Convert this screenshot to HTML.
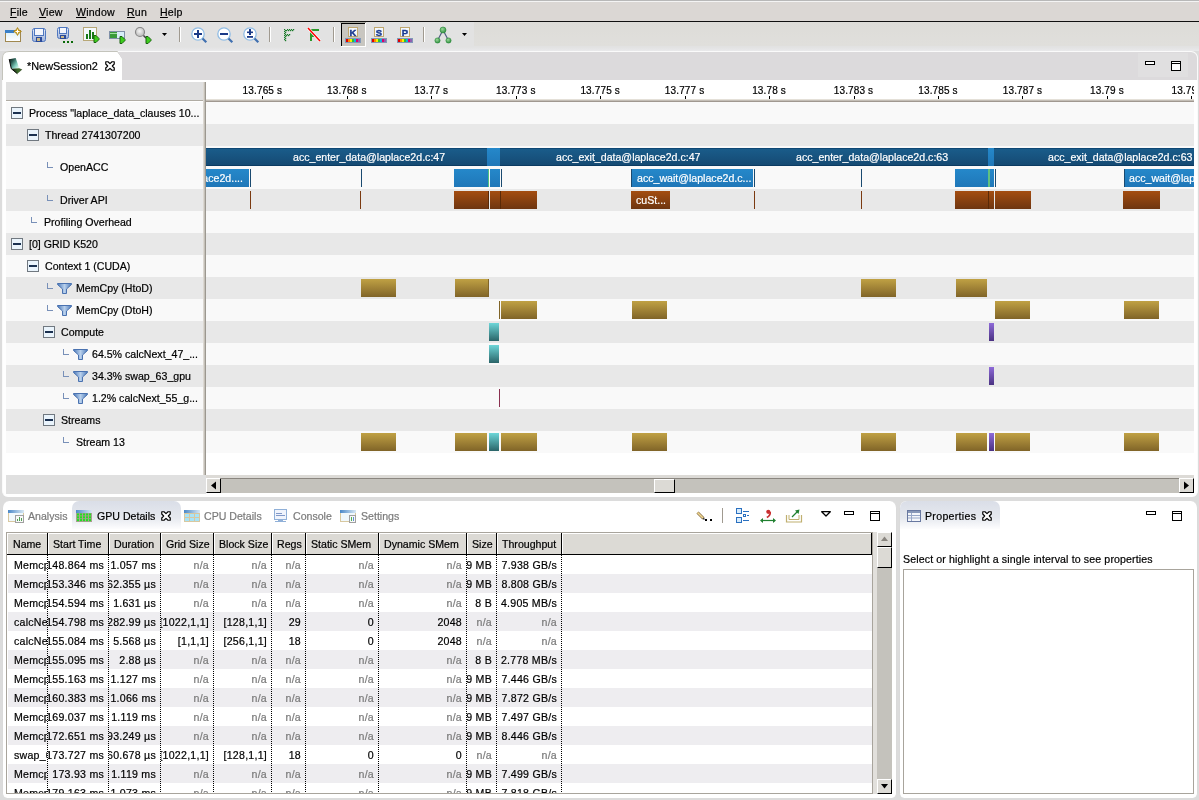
<!DOCTYPE html>
<html><head><meta charset="utf-8">
<style>
*{margin:0;padding:0;box-sizing:border-box}
html,body{width:1199px;height:800px;overflow:hidden;background:#dcdcdc;font-family:"Liberation Sans",sans-serif;font-size:10.6px;color:#000;-webkit-text-stroke-width:0.2px}
#root{position:absolute;left:0;top:0;width:1199px;height:800px;will-change:transform;overflow:hidden}
.a{position:absolute}
.t{position:absolute;white-space:nowrap;line-height:12px}
.mi{font-size:10.6px;top:6px;letter-spacing:0.2px}
.mi u{text-decoration:underline;text-underline-offset:0.5px}
.w{background:#f9f9f9}
.g{background:#e8e8e8}
.minus{position:absolute;width:12px;height:12px;border:1px solid #707880;background:#eaf4fc}
.minus:after{content:"";position:absolute;left:1px;top:4px;width:8px;height:2px;background:#1a3050}
.corner{position:absolute;width:6px;height:6px;border-left:1px solid #7890b8;border-bottom:1px solid #7890b8}
.db{position:absolute;background:linear-gradient(#1a5c8a,#154a73);border-top:1px solid #0e4774;border-bottom:1px solid #0b3b62}
.lb{position:absolute;background:linear-gradient(#2588ca,#1f77b8)}
.or{position:absolute;background:linear-gradient(#a44d10,#6e3510)}
.gd{position:absolute;background:linear-gradient(#c0a144,#806428)}
.tl{position:absolute;background:linear-gradient(#6dd6d8,#2a6468)}
.pu{position:absolute;background:linear-gradient(#8e6ad8,#4a3282)}
.bt{position:absolute;color:#fff;white-space:nowrap;line-height:12px;font-size:10.6px}
.ru{position:absolute;top:83px;white-space:nowrap;line-height:12px;font-size:10px;letter-spacing:0.15px;text-align:center;width:80px}
.tick{position:absolute;top:96px;width:1px;height:3px;background:#000}
.sbtn{position:absolute;background:#dcdad5;border-top:1px solid #fff;border-left:1px solid #fff;border-right:1px solid #000;border-bottom:1px solid #000}
.hd{position:absolute;top:533px;height:21px;background:#dcdad5;border-right:1px solid #000;box-shadow:inset 1px 1px 0 #fff}
.hdt{position:absolute;top:5px;white-space:nowrap;line-height:12px;font-size:10.6px}
.cell{position:absolute;height:19px;overflow:hidden;white-space:nowrap;line-height:19px;font-size:10.6px}
.r{text-align:right}
.na{color:#7a7a7a}
.dot{position:absolute;top:555px;height:238px;width:1px;background:repeating-linear-gradient(#000 0 1px,transparent 1px 2px)}
</style></head><body><div id="root">

<div class="a" style="left:0;top:0;width:1199px;height:1px;background:#b8b8b8"></div>
<div class="a" style="left:0;top:1px;width:1199px;height:1px;background:#f4f4f4"></div>
<div class="a" style="left:0;top:2px;width:1199px;height:19px;background:#dbd7d4"></div>
<div class="a" style="left:0;top:21px;width:1199px;height:1px;background:#101010"></div>
<div class="a" style="left:0;top:22px;width:1199px;height:29px;background:#e2e2e2"></div>
<div class="a" style="left:474px;top:22px;width:725px;height:24px;background:linear-gradient(#dddcd8,#e0dfdc)"></div>
<div class="a" style="left:0;top:47px;width:1199px;height:4px;background:linear-gradient(#e2e2e2,#e9e9eb)"></div>
<div class="t mi" style="left:10px"><u>F</u>ile</div>
<div class="t mi" style="left:39px"><u>V</u>iew</div>
<div class="t mi" style="left:76px"><u>W</u>indow</div>
<div class="t mi" style="left:127px"><u>R</u>un</div>
<div class="t mi" style="left:160px"><u>H</u>elp</div>
<div class="a" style="left:2px;top:51px;width:1196px;height:446px;background:#fff;border:1px solid #fafafa;border-bottom:none;border-radius:7px 7px 6px 6px"></div>
<svg class="a" style="left:2px;top:51px" width="125" height="30"><path d="M0.5 29 V7 Q0.5 0.5 7 0.5 H115.5 L121 8" fill="none" stroke="#c4c4bc" stroke-width="1"/></svg>
<div class="a" style="left:118px;top:52px;width:1079px;height:28px;background:#dcdadc;border-radius:0 6px 0 0;clip-path:polygon(0 0,100% 0,100% 100%,4px 100%,4px 7px)"></div>
<div class="t" style="left:27px;top:60px;font-size:10.9px">*NewSession2</div>
<div class="a" style="left:6px;top:82px;width:197px;height:19px;background:#e0e0e0"></div>
<div class="a" style="left:6px;top:100px;width:197px;height:1px;background:#b0aca4"></div>
<div class="a" style="left:206px;top:99px;width:988px;height:1px;background:#e4e0d8"></div>
<div class="a" style="left:206px;top:100px;width:988px;height:1px;background:#c4beb6"></div>
<div class="a" style="left:206px;top:101px;width:988px;height:1px;background:#a09890"></div>
<div class="a" style="left:206px;top:80px;width:988px;height:19px;overflow:hidden">
<div class="ru" style="left:16.4px;top:5px">13.765 s</div>
<div class="tick" style="left:56px;top:16px"></div>
<div class="ru" style="left:100.8px;top:5px">13.768 s</div>
<div class="tick" style="left:141px;top:16px"></div>
<div class="ru" style="left:185.3px;top:5px">13.77 s</div>
<div class="tick" style="left:225px;top:16px"></div>
<div class="ru" style="left:269.8px;top:5px">13.773 s</div>
<div class="tick" style="left:310px;top:16px"></div>
<div class="ru" style="left:354.2px;top:5px">13.775 s</div>
<div class="tick" style="left:394px;top:16px"></div>
<div class="ru" style="left:438.6px;top:5px">13.777 s</div>
<div class="tick" style="left:479px;top:16px"></div>
<div class="ru" style="left:523.1px;top:5px">13.78 s</div>
<div class="tick" style="left:563px;top:16px"></div>
<div class="ru" style="left:607.5px;top:5px">13.783 s</div>
<div class="tick" style="left:648px;top:16px"></div>
<div class="ru" style="left:692.0px;top:5px">13.785 s</div>
<div class="tick" style="left:732px;top:16px"></div>
<div class="ru" style="left:776.5px;top:5px">13.787 s</div>
<div class="tick" style="left:816px;top:16px"></div>
<div class="ru" style="left:860.9px;top:5px">13.79 s</div>
<div class="tick" style="left:901px;top:16px"></div>
<div class="ru" style="left:945.3px;top:5px">13.792 s</div>
<div class="tick" style="left:985px;top:16px"></div>
</div>
<div class="a" style="left:203px;top:82px;width:2px;height:393px;background:#dcd8d2"></div>
<div class="a" style="left:204px;top:82px;width:1px;height:393px;background:#c4c0b8"></div>
<div class="a" style="left:205px;top:82px;width:1px;height:393px;background:#9c9890"></div>
<div class="a w" style="left:6px;top:102px;width:197px;height:22px"></div>
<div class="a w" style="left:206px;top:102px;width:988px;height:22px"></div>
<div class="a g" style="left:6px;top:124px;width:197px;height:22px"></div>
<div class="a g" style="left:206px;top:124px;width:988px;height:22px"></div>
<div class="a w" style="left:6px;top:146px;width:197px;height:43px"></div>
<div class="a w" style="left:206px;top:146px;width:988px;height:43px"></div>
<div class="a g" style="left:6px;top:189px;width:197px;height:22px"></div>
<div class="a g" style="left:206px;top:189px;width:988px;height:22px"></div>
<div class="a w" style="left:6px;top:211px;width:197px;height:22px"></div>
<div class="a w" style="left:206px;top:211px;width:988px;height:22px"></div>
<div class="a g" style="left:6px;top:233px;width:197px;height:22px"></div>
<div class="a g" style="left:206px;top:233px;width:988px;height:22px"></div>
<div class="a w" style="left:6px;top:255px;width:197px;height:22px"></div>
<div class="a w" style="left:206px;top:255px;width:988px;height:22px"></div>
<div class="a g" style="left:6px;top:277px;width:197px;height:22px"></div>
<div class="a g" style="left:206px;top:277px;width:988px;height:22px"></div>
<div class="a w" style="left:6px;top:299px;width:197px;height:22px"></div>
<div class="a w" style="left:206px;top:299px;width:988px;height:22px"></div>
<div class="a g" style="left:6px;top:321px;width:197px;height:22px"></div>
<div class="a g" style="left:206px;top:321px;width:988px;height:22px"></div>
<div class="a w" style="left:6px;top:343px;width:197px;height:22px"></div>
<div class="a w" style="left:206px;top:343px;width:988px;height:22px"></div>
<div class="a g" style="left:6px;top:365px;width:197px;height:22px"></div>
<div class="a g" style="left:206px;top:365px;width:988px;height:22px"></div>
<div class="a w" style="left:6px;top:387px;width:197px;height:22px"></div>
<div class="a w" style="left:206px;top:387px;width:988px;height:22px"></div>
<div class="a g" style="left:6px;top:409px;width:197px;height:22px"></div>
<div class="a g" style="left:206px;top:409px;width:988px;height:22px"></div>
<div class="a w" style="left:6px;top:431px;width:197px;height:22px"></div>
<div class="a w" style="left:206px;top:431px;width:988px;height:22px"></div>
<div class="minus" style="left:11px;top:107px"></div>
<div class="t" style="left:29px;top:107px">Process "laplace_data_clauses 10...</div>
<div class="minus" style="left:27px;top:129px"></div>
<div class="t" style="left:45px;top:129px">Thread 2741307200</div>
<div class="corner" style="left:47px;top:162px"></div>
<div class="t" style="left:60px;top:161px">OpenACC</div>
<div class="corner" style="left:47px;top:195px"></div>
<div class="t" style="left:60px;top:194px">Driver API</div>
<div class="corner" style="left:31px;top:217px"></div>
<div class="t" style="left:44px;top:216px">Profiling Overhead</div>
<div class="minus" style="left:11px;top:238px"></div>
<div class="t" style="left:29px;top:238px">[0] GRID K520</div>
<div class="minus" style="left:27px;top:260px"></div>
<div class="t" style="left:45px;top:260px">Context 1 (CUDA)</div>
<div class="corner" style="left:47px;top:283px"></div>
<svg class="a" style="left:57px;top:283px" width="15" height="11" viewBox="0 0 15 11"><defs><linearGradient id="fg" x1="0" x2="1"><stop offset="0" stop-color="#4a78b8"/><stop offset="0.5" stop-color="#b8d0ec"/><stop offset="1" stop-color="#4a78b8"/></linearGradient></defs><path d="M0.5 0.5 H14.5 V1.5 L9.5 6 V10.5 H5.5 V6 L0.5 1.5 Z" fill="url(#fg)" stroke="#4a72b0" stroke-width="1"/></svg>
<div class="t" style="left:76px;top:282px">MemCpy (HtoD)</div>
<div class="corner" style="left:47px;top:305px"></div>
<svg class="a" style="left:57px;top:305px" width="15" height="11" viewBox="0 0 15 11"><defs><linearGradient id="fg" x1="0" x2="1"><stop offset="0" stop-color="#4a78b8"/><stop offset="0.5" stop-color="#b8d0ec"/><stop offset="1" stop-color="#4a78b8"/></linearGradient></defs><path d="M0.5 0.5 H14.5 V1.5 L9.5 6 V10.5 H5.5 V6 L0.5 1.5 Z" fill="url(#fg)" stroke="#4a72b0" stroke-width="1"/></svg>
<div class="t" style="left:76px;top:304px">MemCpy (DtoH)</div>
<div class="minus" style="left:43px;top:326px"></div>
<div class="t" style="left:61px;top:326px">Compute</div>
<div class="corner" style="left:63px;top:349px"></div>
<svg class="a" style="left:73px;top:349px" width="15" height="11" viewBox="0 0 15 11"><defs><linearGradient id="fg" x1="0" x2="1"><stop offset="0" stop-color="#4a78b8"/><stop offset="0.5" stop-color="#b8d0ec"/><stop offset="1" stop-color="#4a78b8"/></linearGradient></defs><path d="M0.5 0.5 H14.5 V1.5 L9.5 6 V10.5 H5.5 V6 L0.5 1.5 Z" fill="url(#fg)" stroke="#4a72b0" stroke-width="1"/></svg>
<div class="t" style="left:92px;top:348px">64.5% calcNext_47_...</div>
<div class="corner" style="left:63px;top:371px"></div>
<svg class="a" style="left:73px;top:371px" width="15" height="11" viewBox="0 0 15 11"><defs><linearGradient id="fg" x1="0" x2="1"><stop offset="0" stop-color="#4a78b8"/><stop offset="0.5" stop-color="#b8d0ec"/><stop offset="1" stop-color="#4a78b8"/></linearGradient></defs><path d="M0.5 0.5 H14.5 V1.5 L9.5 6 V10.5 H5.5 V6 L0.5 1.5 Z" fill="url(#fg)" stroke="#4a72b0" stroke-width="1"/></svg>
<div class="t" style="left:92px;top:370px">34.3% swap_63_gpu</div>
<div class="corner" style="left:63px;top:393px"></div>
<svg class="a" style="left:73px;top:393px" width="15" height="11" viewBox="0 0 15 11"><defs><linearGradient id="fg" x1="0" x2="1"><stop offset="0" stop-color="#4a78b8"/><stop offset="0.5" stop-color="#b8d0ec"/><stop offset="1" stop-color="#4a78b8"/></linearGradient></defs><path d="M0.5 0.5 H14.5 V1.5 L9.5 6 V10.5 H5.5 V6 L0.5 1.5 Z" fill="url(#fg)" stroke="#4a72b0" stroke-width="1"/></svg>
<div class="t" style="left:92px;top:392px">1.2% calcNext_55_g...</div>
<div class="minus" style="left:43px;top:414px"></div>
<div class="t" style="left:61px;top:414px">Streams</div>
<div class="corner" style="left:63px;top:437px"></div>
<div class="t" style="left:76px;top:436px">Stream 13</div>
<div class="db" style="left:206px;top:148px;width:281px;height:18px"></div>
<div class="lb" style="left:487px;top:148px;width:13px;height:18px"></div>
<div class="db" style="left:500px;top:148px;width:488px;height:18px"></div>
<div class="lb" style="left:988px;top:148px;width:6px;height:18px"></div>
<div class="db" style="left:994px;top:148px;width:200px;height:18px"></div>
<div class="bt" style="left:293px;top:151px">acc_enter_data@laplace2d.c:47</div>
<div class="bt" style="left:556px;top:151px">acc_exit_data@laplace2d.c:47</div>
<div class="bt" style="left:796px;top:151px">acc_enter_data@laplace2d.c:63</div>
<div class="bt" style="left:1048px;top:151px">acc_exit_data@laplace2d.c:63</div>
<div class="lb" style="left:206px;top:169px;width:43px;height:18px;overflow:hidden"><div class="bt" style="right:6px;top:3px">ace2d....</div></div>
<div class="a" style="left:250px;top:169px;width:1px;height:18px;background:#1a4a70"></div>
<div class="a" style="left:361px;top:169px;width:1px;height:18px;background:#1a4a70"></div>
<div class="lb" style="left:454px;top:169px;width:34px;height:18px"></div>
<div class="a" style="left:488px;top:169px;width:1px;height:18px;background:#50c080"></div>
<div class="lb" style="left:490px;top:169px;width:10px;height:18px"></div>
<div class="a" style="left:501px;top:169px;width:1px;height:18px;background:#1a4a70"></div>
<div class="lb" style="left:631px;top:169px;width:122px;height:18px;overflow:hidden;border-left:1px solid #1a4a70"><div class="bt" style="left:5px;top:3px">acc_wait@laplace2d.c...</div></div>
<div class="a" style="left:754px;top:169px;width:1px;height:18px;background:#1a4a70"></div>
<div class="a" style="left:861px;top:169px;width:1px;height:18px;background:#1a4a70"></div>
<div class="lb" style="left:955px;top:169px;width:39px;height:18px"></div>
<div class="a" style="left:988px;top:169px;width:2px;height:18px;background:#60c080"></div>
<div class="a" style="left:995px;top:169px;width:1px;height:18px;background:#1a4a70"></div>
<div class="lb" style="left:1124px;top:169px;width:70px;height:18px;overflow:hidden;border-left:1px solid #1a4a70"><div class="bt" style="left:4px;top:3px">acc_wait@laplace2d.c:63</div></div>
<div class="a" style="left:250px;top:191px;width:1px;height:18px;background:#7a3a10"></div>
<div class="a" style="left:360px;top:191px;width:1px;height:18px;background:#7a3a10"></div>
<div class="or" style="left:454px;top:191px;width:35px;height:18px"></div>
<div class="a" style="left:488px;top:191px;width:1px;height:18px;background:#5a2a08"></div>
<div class="or" style="left:490px;top:191px;width:47px;height:18px"></div>
<div class="a" style="left:500px;top:191px;width:1px;height:18px;background:#5a2a08"></div>
<div class="or" style="left:631px;top:191px;width:39px;height:18px;overflow:hidden"><div class="bt" style="left:5px;top:3px">cuSt...</div></div>
<div class="a" style="left:754px;top:191px;width:1px;height:18px;background:#7a3a10"></div>
<div class="a" style="left:861px;top:191px;width:1px;height:18px;background:#7a3a10"></div>
<div class="or" style="left:955px;top:191px;width:39px;height:18px"></div>
<div class="a" style="left:988px;top:191px;width:1px;height:18px;background:#5a2a08"></div>
<div class="or" style="left:995px;top:191px;width:36px;height:18px"></div>
<div class="or" style="left:1123px;top:191px;width:37px;height:18px"></div>
<div class="gd" style="left:361px;top:279px;width:35px;height:18px"></div>
<div class="gd" style="left:455px;top:279px;width:33px;height:18px"></div>
<div class="gd" style="left:861px;top:279px;width:35px;height:18px"></div>
<div class="gd" style="left:956px;top:279px;width:31px;height:18px"></div>
<div class="a" style="left:488px;top:279px;width:1px;height:18px;background:#806428"></div>
<div class="a" style="left:499px;top:301px;width:1px;height:18px;background:#806428"></div>
<div class="gd" style="left:501px;top:301px;width:36px;height:18px"></div>
<div class="gd" style="left:632px;top:301px;width:35px;height:18px"></div>
<div class="gd" style="left:995px;top:301px;width:35px;height:18px"></div>
<div class="gd" style="left:1124px;top:301px;width:35px;height:18px"></div>
<div class="tl" style="left:489px;top:323px;width:10px;height:18px"></div>
<div class="pu" style="left:989px;top:323px;width:5px;height:18px"></div>
<div class="tl" style="left:489px;top:345px;width:10px;height:18px"></div>
<div class="pu" style="left:989px;top:367px;width:5px;height:18px"></div>
<div class="a" style="left:499px;top:389px;width:1px;height:18px;background:#8a3050"></div>
<div class="gd" style="left:361px;top:433px;width:35px;height:18px"></div>
<div class="gd" style="left:455px;top:433px;width:32px;height:18px"></div>
<div class="gd" style="left:501px;top:433px;width:36px;height:18px"></div>
<div class="gd" style="left:632px;top:433px;width:35px;height:18px"></div>
<div class="gd" style="left:861px;top:433px;width:35px;height:18px"></div>
<div class="gd" style="left:956px;top:433px;width:31px;height:18px"></div>
<div class="gd" style="left:995px;top:433px;width:35px;height:18px"></div>
<div class="gd" style="left:1124px;top:433px;width:35px;height:18px"></div>
<div class="tl" style="left:489px;top:433px;width:10px;height:18px"></div>
<div class="pu" style="left:989px;top:433px;width:5px;height:18px"></div>
<div class="a" style="left:6px;top:475px;width:200px;height:19px;background:#e0e0e0"></div>
<div class="a" style="left:206px;top:475px;width:988px;height:3px;background:#dcdad6"></div>
<div class="a" style="left:206px;top:478px;width:988px;height:1px;background:#8a8680"></div>
<div class="a" style="left:206px;top:479px;width:988px;height:14px;background:#c4c2bc"></div>
<div class="sbtn" style="left:206px;top:478px;width:15px;height:15px"></div>
<svg class="a" style="left:210px;top:481px" width="8" height="9"><path d="M1 4.5 L6 0.5 V8.5 Z" fill="#000"/></svg>
<div class="sbtn" style="left:654px;top:479px;width:21px;height:14px"></div>
<div class="sbtn" style="left:1179px;top:478px;width:15px;height:15px"></div>
<svg class="a" style="left:1183px;top:481px" width="8" height="9"><path d="M6 4.5 L1 0.5 V8.5 Z" fill="#000"/></svg>
<div class="a" style="left:1138px;top:53px;width:50px;height:24px;background:#e0dfe0"></div>
<div class="a" style="left:1145px;top:61px;width:10px;height:4px;border:1px solid #000;background:#fff"></div>
<div class="a" style="left:1171px;top:61px;width:10px;height:10px;border:1px solid #000;background:#fff;box-shadow:inset 0 1px 0 #fff,inset 0 2px 0 #000"></div>
<div class="a" style="left:2px;top:501px;width:895px;height:297px;background:#fff;border:1px solid #dadada;border-top:none;border-bottom:none;border-radius:7px 7px 5px 5px"></div>
<div class="a" style="left:72px;top:501px;width:109px;height:28px;background:linear-gradient(#dadee7,#e6e9ef 60%,#fdfdfe);border-radius:7px 7px 0 0"></div>
<div class="t" style="left:28px;top:510px;color:#7a7a7a">Analysis</div>
<div class="t" style="left:97px;top:510px;color:#000">GPU Details</div>
<div class="t" style="left:204px;top:510px;color:#7a7a7a">CPU Details</div>
<div class="t" style="left:293px;top:510px;color:#7a7a7a">Console</div>
<div class="t" style="left:361px;top:510px;color:#7a7a7a">Settings</div>
<div class="a" style="left:6px;top:532px;width:867px;height:262px;border:1px solid #a8a49c;background:#fff"></div>
<div class="hd" style="left:7px;width:41px"><div class="hdt" style="left:6px">Name</div></div>
<div class="hd" style="left:48px;width:61px"><div class="hdt" style="left:5px">Start Time</div></div>
<div class="hd" style="left:109px;width:52px"><div class="hdt" style="left:5px">Duration</div></div>
<div class="hd" style="left:161px;width:53px"><div class="hdt" style="left:5px">Grid Size</div></div>
<div class="hd" style="left:214px;width:58px"><div class="hdt" style="left:5px">Block Size</div></div>
<div class="hd" style="left:272px;width:34px"><div class="hdt" style="left:5px">Regs</div></div>
<div class="hd" style="left:306px;width:73px"><div class="hdt" style="left:5px">Static SMem</div></div>
<div class="hd" style="left:379px;width:88px"><div class="hdt" style="left:5px">Dynamic SMem</div></div>
<div class="hd" style="left:467px;width:30px"><div class="hdt" style="left:5px">Size</div></div>
<div class="hd" style="left:497px;width:65px"><div class="hdt" style="left:5px">Throughput</div></div>
<div class="hd" style="left:562px;width:310px"></div>
<div class="a" style="left:7px;top:554px;width:865px;height:1px;background:#000"></div>
<div class="a" style="left:7px;top:555px;width:865px;height:238px;overflow:hidden">
<div class="a" style="left:1px;top:0px;width:864px;height:19px;background:#fff"></div>
<div class="cell" style="left:0px;top:0px;width:40px"><span style="position:absolute;top:1px;left:7px;letter-spacing:0.25px">Memcpy HtoD</span></div>
<div class="cell " style="left:41px;top:0px;width:60px"><span style="position:absolute;top:1px;right:4px;letter-spacing:0.25px">148.864 ms</span></div>
<div class="cell " style="left:102px;top:0px;width:51px"><span style="position:absolute;top:1px;right:4px;letter-spacing:0.25px">1.057 ms</span></div>
<div class="cell na" style="left:154px;top:0px;width:52px"><span style="position:absolute;top:1px;right:4px;letter-spacing:0.25px">n/a</span></div>
<div class="cell na" style="left:207px;top:0px;width:57px"><span style="position:absolute;top:1px;right:4px;letter-spacing:0.25px">n/a</span></div>
<div class="cell na" style="left:265px;top:0px;width:33px"><span style="position:absolute;top:1px;right:4px;letter-spacing:0.25px">n/a</span></div>
<div class="cell na" style="left:299px;top:0px;width:72px"><span style="position:absolute;top:1px;right:4px;letter-spacing:0.25px">n/a</span></div>
<div class="cell na" style="left:372px;top:0px;width:87px"><span style="position:absolute;top:1px;right:4px;letter-spacing:0.25px">n/a</span></div>
<div class="cell " style="left:460px;top:0px;width:29px"><span style="position:absolute;top:1px;right:4px;letter-spacing:0.25px">7.9 MB</span></div>
<div class="cell " style="left:490px;top:0px;width:64px"><span style="position:absolute;top:1px;right:4px;letter-spacing:0.25px">7.938 GB/s</span></div>
<div class="a" style="left:1px;top:19px;width:864px;height:19px;background:#eeedf0"></div>
<div class="cell" style="left:0px;top:19px;width:40px"><span style="position:absolute;top:1px;left:7px;letter-spacing:0.25px">Memcpy HtoD</span></div>
<div class="cell " style="left:41px;top:19px;width:60px"><span style="position:absolute;top:1px;right:4px;letter-spacing:0.25px">153.346 ms</span></div>
<div class="cell " style="left:102px;top:19px;width:51px"><span style="position:absolute;top:1px;right:4px;letter-spacing:0.25px">62.355 µs</span></div>
<div class="cell na" style="left:154px;top:19px;width:52px"><span style="position:absolute;top:1px;right:4px;letter-spacing:0.25px">n/a</span></div>
<div class="cell na" style="left:207px;top:19px;width:57px"><span style="position:absolute;top:1px;right:4px;letter-spacing:0.25px">n/a</span></div>
<div class="cell na" style="left:265px;top:19px;width:33px"><span style="position:absolute;top:1px;right:4px;letter-spacing:0.25px">n/a</span></div>
<div class="cell na" style="left:299px;top:19px;width:72px"><span style="position:absolute;top:1px;right:4px;letter-spacing:0.25px">n/a</span></div>
<div class="cell na" style="left:372px;top:19px;width:87px"><span style="position:absolute;top:1px;right:4px;letter-spacing:0.25px">n/a</span></div>
<div class="cell " style="left:460px;top:19px;width:29px"><span style="position:absolute;top:1px;right:4px;letter-spacing:0.25px">7.9 MB</span></div>
<div class="cell " style="left:490px;top:19px;width:64px"><span style="position:absolute;top:1px;right:4px;letter-spacing:0.25px">8.808 GB/s</span></div>
<div class="a" style="left:1px;top:38px;width:864px;height:19px;background:#fff"></div>
<div class="cell" style="left:0px;top:38px;width:40px"><span style="position:absolute;top:1px;left:7px;letter-spacing:0.25px">Memcpy HtoD</span></div>
<div class="cell " style="left:41px;top:38px;width:60px"><span style="position:absolute;top:1px;right:4px;letter-spacing:0.25px">154.594 ms</span></div>
<div class="cell " style="left:102px;top:38px;width:51px"><span style="position:absolute;top:1px;right:4px;letter-spacing:0.25px">1.631 µs</span></div>
<div class="cell na" style="left:154px;top:38px;width:52px"><span style="position:absolute;top:1px;right:4px;letter-spacing:0.25px">n/a</span></div>
<div class="cell na" style="left:207px;top:38px;width:57px"><span style="position:absolute;top:1px;right:4px;letter-spacing:0.25px">n/a</span></div>
<div class="cell na" style="left:265px;top:38px;width:33px"><span style="position:absolute;top:1px;right:4px;letter-spacing:0.25px">n/a</span></div>
<div class="cell na" style="left:299px;top:38px;width:72px"><span style="position:absolute;top:1px;right:4px;letter-spacing:0.25px">n/a</span></div>
<div class="cell na" style="left:372px;top:38px;width:87px"><span style="position:absolute;top:1px;right:4px;letter-spacing:0.25px">n/a</span></div>
<div class="cell " style="left:460px;top:38px;width:29px"><span style="position:absolute;top:1px;right:4px;letter-spacing:0.25px">8 B</span></div>
<div class="cell " style="left:490px;top:38px;width:64px"><span style="position:absolute;top:1px;right:4px;letter-spacing:0.25px">4.905 MB/s</span></div>
<div class="a" style="left:1px;top:57px;width:864px;height:19px;background:#eeedf0"></div>
<div class="cell" style="left:0px;top:57px;width:40px"><span style="position:absolute;top:1px;left:7px;letter-spacing:0.25px">calcNext_47_gpu</span></div>
<div class="cell " style="left:41px;top:57px;width:60px"><span style="position:absolute;top:1px;right:4px;letter-spacing:0.25px">154.798 ms</span></div>
<div class="cell " style="left:102px;top:57px;width:51px"><span style="position:absolute;top:1px;right:4px;letter-spacing:0.25px">282.99 µs</span></div>
<div class="cell " style="left:154px;top:57px;width:52px"><span style="position:absolute;top:1px;right:4px;letter-spacing:0.25px">[1022,1,1]</span></div>
<div class="cell " style="left:207px;top:57px;width:57px"><span style="position:absolute;top:1px;right:4px;letter-spacing:0.25px">[128,1,1]</span></div>
<div class="cell " style="left:265px;top:57px;width:33px"><span style="position:absolute;top:1px;right:4px;letter-spacing:0.25px">29</span></div>
<div class="cell " style="left:299px;top:57px;width:72px"><span style="position:absolute;top:1px;right:4px;letter-spacing:0.25px">0</span></div>
<div class="cell " style="left:372px;top:57px;width:87px"><span style="position:absolute;top:1px;right:4px;letter-spacing:0.25px">2048</span></div>
<div class="cell na" style="left:460px;top:57px;width:29px"><span style="position:absolute;top:1px;right:4px;letter-spacing:0.25px">n/a</span></div>
<div class="cell na" style="left:490px;top:57px;width:64px"><span style="position:absolute;top:1px;right:4px;letter-spacing:0.25px">n/a</span></div>
<div class="a" style="left:1px;top:76px;width:864px;height:19px;background:#fff"></div>
<div class="cell" style="left:0px;top:76px;width:40px"><span style="position:absolute;top:1px;left:7px;letter-spacing:0.25px">calcNext_55_gpu</span></div>
<div class="cell " style="left:41px;top:76px;width:60px"><span style="position:absolute;top:1px;right:4px;letter-spacing:0.25px">155.084 ms</span></div>
<div class="cell " style="left:102px;top:76px;width:51px"><span style="position:absolute;top:1px;right:4px;letter-spacing:0.25px">5.568 µs</span></div>
<div class="cell " style="left:154px;top:76px;width:52px"><span style="position:absolute;top:1px;right:4px;letter-spacing:0.25px">[1,1,1]</span></div>
<div class="cell " style="left:207px;top:76px;width:57px"><span style="position:absolute;top:1px;right:4px;letter-spacing:0.25px">[256,1,1]</span></div>
<div class="cell " style="left:265px;top:76px;width:33px"><span style="position:absolute;top:1px;right:4px;letter-spacing:0.25px">18</span></div>
<div class="cell " style="left:299px;top:76px;width:72px"><span style="position:absolute;top:1px;right:4px;letter-spacing:0.25px">0</span></div>
<div class="cell " style="left:372px;top:76px;width:87px"><span style="position:absolute;top:1px;right:4px;letter-spacing:0.25px">2048</span></div>
<div class="cell na" style="left:460px;top:76px;width:29px"><span style="position:absolute;top:1px;right:4px;letter-spacing:0.25px">n/a</span></div>
<div class="cell na" style="left:490px;top:76px;width:64px"><span style="position:absolute;top:1px;right:4px;letter-spacing:0.25px">n/a</span></div>
<div class="a" style="left:1px;top:95px;width:864px;height:19px;background:#eeedf0"></div>
<div class="cell" style="left:0px;top:95px;width:40px"><span style="position:absolute;top:1px;left:7px;letter-spacing:0.25px">Memcpy DtoH</span></div>
<div class="cell " style="left:41px;top:95px;width:60px"><span style="position:absolute;top:1px;right:4px;letter-spacing:0.25px">155.095 ms</span></div>
<div class="cell " style="left:102px;top:95px;width:51px"><span style="position:absolute;top:1px;right:4px;letter-spacing:0.25px">2.88 µs</span></div>
<div class="cell na" style="left:154px;top:95px;width:52px"><span style="position:absolute;top:1px;right:4px;letter-spacing:0.25px">n/a</span></div>
<div class="cell na" style="left:207px;top:95px;width:57px"><span style="position:absolute;top:1px;right:4px;letter-spacing:0.25px">n/a</span></div>
<div class="cell na" style="left:265px;top:95px;width:33px"><span style="position:absolute;top:1px;right:4px;letter-spacing:0.25px">n/a</span></div>
<div class="cell na" style="left:299px;top:95px;width:72px"><span style="position:absolute;top:1px;right:4px;letter-spacing:0.25px">n/a</span></div>
<div class="cell na" style="left:372px;top:95px;width:87px"><span style="position:absolute;top:1px;right:4px;letter-spacing:0.25px">n/a</span></div>
<div class="cell " style="left:460px;top:95px;width:29px"><span style="position:absolute;top:1px;right:4px;letter-spacing:0.25px">8 B</span></div>
<div class="cell " style="left:490px;top:95px;width:64px"><span style="position:absolute;top:1px;right:4px;letter-spacing:0.25px">2.778 MB/s</span></div>
<div class="a" style="left:1px;top:114px;width:864px;height:19px;background:#fff"></div>
<div class="cell" style="left:0px;top:114px;width:40px"><span style="position:absolute;top:1px;left:7px;letter-spacing:0.25px">Memcpy DtoH</span></div>
<div class="cell " style="left:41px;top:114px;width:60px"><span style="position:absolute;top:1px;right:4px;letter-spacing:0.25px">155.163 ms</span></div>
<div class="cell " style="left:102px;top:114px;width:51px"><span style="position:absolute;top:1px;right:4px;letter-spacing:0.25px">1.127 ms</span></div>
<div class="cell na" style="left:154px;top:114px;width:52px"><span style="position:absolute;top:1px;right:4px;letter-spacing:0.25px">n/a</span></div>
<div class="cell na" style="left:207px;top:114px;width:57px"><span style="position:absolute;top:1px;right:4px;letter-spacing:0.25px">n/a</span></div>
<div class="cell na" style="left:265px;top:114px;width:33px"><span style="position:absolute;top:1px;right:4px;letter-spacing:0.25px">n/a</span></div>
<div class="cell na" style="left:299px;top:114px;width:72px"><span style="position:absolute;top:1px;right:4px;letter-spacing:0.25px">n/a</span></div>
<div class="cell na" style="left:372px;top:114px;width:87px"><span style="position:absolute;top:1px;right:4px;letter-spacing:0.25px">n/a</span></div>
<div class="cell " style="left:460px;top:114px;width:29px"><span style="position:absolute;top:1px;right:4px;letter-spacing:0.25px">7.9 MB</span></div>
<div class="cell " style="left:490px;top:114px;width:64px"><span style="position:absolute;top:1px;right:4px;letter-spacing:0.25px">7.446 GB/s</span></div>
<div class="a" style="left:1px;top:133px;width:864px;height:19px;background:#eeedf0"></div>
<div class="cell" style="left:0px;top:133px;width:40px"><span style="position:absolute;top:1px;left:7px;letter-spacing:0.25px">Memcpy HtoD</span></div>
<div class="cell " style="left:41px;top:133px;width:60px"><span style="position:absolute;top:1px;right:4px;letter-spacing:0.25px">160.383 ms</span></div>
<div class="cell " style="left:102px;top:133px;width:51px"><span style="position:absolute;top:1px;right:4px;letter-spacing:0.25px">1.066 ms</span></div>
<div class="cell na" style="left:154px;top:133px;width:52px"><span style="position:absolute;top:1px;right:4px;letter-spacing:0.25px">n/a</span></div>
<div class="cell na" style="left:207px;top:133px;width:57px"><span style="position:absolute;top:1px;right:4px;letter-spacing:0.25px">n/a</span></div>
<div class="cell na" style="left:265px;top:133px;width:33px"><span style="position:absolute;top:1px;right:4px;letter-spacing:0.25px">n/a</span></div>
<div class="cell na" style="left:299px;top:133px;width:72px"><span style="position:absolute;top:1px;right:4px;letter-spacing:0.25px">n/a</span></div>
<div class="cell na" style="left:372px;top:133px;width:87px"><span style="position:absolute;top:1px;right:4px;letter-spacing:0.25px">n/a</span></div>
<div class="cell " style="left:460px;top:133px;width:29px"><span style="position:absolute;top:1px;right:4px;letter-spacing:0.25px">7.9 MB</span></div>
<div class="cell " style="left:490px;top:133px;width:64px"><span style="position:absolute;top:1px;right:4px;letter-spacing:0.25px">7.872 GB/s</span></div>
<div class="a" style="left:1px;top:152px;width:864px;height:19px;background:#fff"></div>
<div class="cell" style="left:0px;top:152px;width:40px"><span style="position:absolute;top:1px;left:7px;letter-spacing:0.25px">Memcpy DtoH</span></div>
<div class="cell " style="left:41px;top:152px;width:60px"><span style="position:absolute;top:1px;right:4px;letter-spacing:0.25px">169.037 ms</span></div>
<div class="cell " style="left:102px;top:152px;width:51px"><span style="position:absolute;top:1px;right:4px;letter-spacing:0.25px">1.119 ms</span></div>
<div class="cell na" style="left:154px;top:152px;width:52px"><span style="position:absolute;top:1px;right:4px;letter-spacing:0.25px">n/a</span></div>
<div class="cell na" style="left:207px;top:152px;width:57px"><span style="position:absolute;top:1px;right:4px;letter-spacing:0.25px">n/a</span></div>
<div class="cell na" style="left:265px;top:152px;width:33px"><span style="position:absolute;top:1px;right:4px;letter-spacing:0.25px">n/a</span></div>
<div class="cell na" style="left:299px;top:152px;width:72px"><span style="position:absolute;top:1px;right:4px;letter-spacing:0.25px">n/a</span></div>
<div class="cell na" style="left:372px;top:152px;width:87px"><span style="position:absolute;top:1px;right:4px;letter-spacing:0.25px">n/a</span></div>
<div class="cell " style="left:460px;top:152px;width:29px"><span style="position:absolute;top:1px;right:4px;letter-spacing:0.25px">7.9 MB</span></div>
<div class="cell " style="left:490px;top:152px;width:64px"><span style="position:absolute;top:1px;right:4px;letter-spacing:0.25px">7.497 GB/s</span></div>
<div class="a" style="left:1px;top:171px;width:864px;height:19px;background:#eeedf0"></div>
<div class="cell" style="left:0px;top:171px;width:40px"><span style="position:absolute;top:1px;left:7px;letter-spacing:0.25px">Memcpy HtoD</span></div>
<div class="cell " style="left:41px;top:171px;width:60px"><span style="position:absolute;top:1px;right:4px;letter-spacing:0.25px">172.651 ms</span></div>
<div class="cell " style="left:102px;top:171px;width:51px"><span style="position:absolute;top:1px;right:4px;letter-spacing:0.25px">93.249 µs</span></div>
<div class="cell na" style="left:154px;top:171px;width:52px"><span style="position:absolute;top:1px;right:4px;letter-spacing:0.25px">n/a</span></div>
<div class="cell na" style="left:207px;top:171px;width:57px"><span style="position:absolute;top:1px;right:4px;letter-spacing:0.25px">n/a</span></div>
<div class="cell na" style="left:265px;top:171px;width:33px"><span style="position:absolute;top:1px;right:4px;letter-spacing:0.25px">n/a</span></div>
<div class="cell na" style="left:299px;top:171px;width:72px"><span style="position:absolute;top:1px;right:4px;letter-spacing:0.25px">n/a</span></div>
<div class="cell na" style="left:372px;top:171px;width:87px"><span style="position:absolute;top:1px;right:4px;letter-spacing:0.25px">n/a</span></div>
<div class="cell " style="left:460px;top:171px;width:29px"><span style="position:absolute;top:1px;right:4px;letter-spacing:0.25px">7.9 MB</span></div>
<div class="cell " style="left:490px;top:171px;width:64px"><span style="position:absolute;top:1px;right:4px;letter-spacing:0.25px">8.446 GB/s</span></div>
<div class="a" style="left:1px;top:190px;width:864px;height:19px;background:#fff"></div>
<div class="cell" style="left:0px;top:190px;width:40px"><span style="position:absolute;top:1px;left:7px;letter-spacing:0.25px">swap_63_gpu</span></div>
<div class="cell " style="left:41px;top:190px;width:60px"><span style="position:absolute;top:1px;right:4px;letter-spacing:0.25px">173.727 ms</span></div>
<div class="cell " style="left:102px;top:190px;width:51px"><span style="position:absolute;top:1px;right:4px;letter-spacing:0.25px">60.678 µs</span></div>
<div class="cell " style="left:154px;top:190px;width:52px"><span style="position:absolute;top:1px;right:4px;letter-spacing:0.25px">[1022,1,1]</span></div>
<div class="cell " style="left:207px;top:190px;width:57px"><span style="position:absolute;top:1px;right:4px;letter-spacing:0.25px">[128,1,1]</span></div>
<div class="cell " style="left:265px;top:190px;width:33px"><span style="position:absolute;top:1px;right:4px;letter-spacing:0.25px">18</span></div>
<div class="cell " style="left:299px;top:190px;width:72px"><span style="position:absolute;top:1px;right:4px;letter-spacing:0.25px">0</span></div>
<div class="cell " style="left:372px;top:190px;width:87px"><span style="position:absolute;top:1px;right:4px;letter-spacing:0.25px">0</span></div>
<div class="cell na" style="left:460px;top:190px;width:29px"><span style="position:absolute;top:1px;right:4px;letter-spacing:0.25px">n/a</span></div>
<div class="cell na" style="left:490px;top:190px;width:64px"><span style="position:absolute;top:1px;right:4px;letter-spacing:0.25px">n/a</span></div>
<div class="a" style="left:1px;top:209px;width:864px;height:19px;background:#eeedf0"></div>
<div class="cell" style="left:0px;top:209px;width:40px"><span style="position:absolute;top:1px;left:7px;letter-spacing:0.25px">Memcpy DtoH</span></div>
<div class="cell " style="left:41px;top:209px;width:60px"><span style="position:absolute;top:1px;right:4px;letter-spacing:0.25px">173.93 ms</span></div>
<div class="cell " style="left:102px;top:209px;width:51px"><span style="position:absolute;top:1px;right:4px;letter-spacing:0.25px">1.119 ms</span></div>
<div class="cell na" style="left:154px;top:209px;width:52px"><span style="position:absolute;top:1px;right:4px;letter-spacing:0.25px">n/a</span></div>
<div class="cell na" style="left:207px;top:209px;width:57px"><span style="position:absolute;top:1px;right:4px;letter-spacing:0.25px">n/a</span></div>
<div class="cell na" style="left:265px;top:209px;width:33px"><span style="position:absolute;top:1px;right:4px;letter-spacing:0.25px">n/a</span></div>
<div class="cell na" style="left:299px;top:209px;width:72px"><span style="position:absolute;top:1px;right:4px;letter-spacing:0.25px">n/a</span></div>
<div class="cell na" style="left:372px;top:209px;width:87px"><span style="position:absolute;top:1px;right:4px;letter-spacing:0.25px">n/a</span></div>
<div class="cell " style="left:460px;top:209px;width:29px"><span style="position:absolute;top:1px;right:4px;letter-spacing:0.25px">7.9 MB</span></div>
<div class="cell " style="left:490px;top:209px;width:64px"><span style="position:absolute;top:1px;right:4px;letter-spacing:0.25px">7.499 GB/s</span></div>
<div class="a" style="left:1px;top:228px;width:864px;height:19px;background:#fff"></div>
<div class="cell" style="left:0px;top:228px;width:40px"><span style="position:absolute;top:1px;left:7px;letter-spacing:0.25px">Memcpy HtoD</span></div>
<div class="cell " style="left:41px;top:228px;width:60px"><span style="position:absolute;top:1px;right:4px;letter-spacing:0.25px">179.163 ms</span></div>
<div class="cell " style="left:102px;top:228px;width:51px"><span style="position:absolute;top:1px;right:4px;letter-spacing:0.25px">1.073 ms</span></div>
<div class="cell na" style="left:154px;top:228px;width:52px"><span style="position:absolute;top:1px;right:4px;letter-spacing:0.25px">n/a</span></div>
<div class="cell na" style="left:207px;top:228px;width:57px"><span style="position:absolute;top:1px;right:4px;letter-spacing:0.25px">n/a</span></div>
<div class="cell na" style="left:265px;top:228px;width:33px"><span style="position:absolute;top:1px;right:4px;letter-spacing:0.25px">n/a</span></div>
<div class="cell na" style="left:299px;top:228px;width:72px"><span style="position:absolute;top:1px;right:4px;letter-spacing:0.25px">n/a</span></div>
<div class="cell na" style="left:372px;top:228px;width:87px"><span style="position:absolute;top:1px;right:4px;letter-spacing:0.25px">n/a</span></div>
<div class="cell " style="left:460px;top:228px;width:29px"><span style="position:absolute;top:1px;right:4px;letter-spacing:0.25px">7.9 MB</span></div>
<div class="cell " style="left:490px;top:228px;width:64px"><span style="position:absolute;top:1px;right:4px;letter-spacing:0.25px">7.818 GB/s</span></div>
</div>
<div class="dot" style="left:47px"></div>
<div class="dot" style="left:108px"></div>
<div class="dot" style="left:160px"></div>
<div class="dot" style="left:213px"></div>
<div class="dot" style="left:271px"></div>
<div class="dot" style="left:305px"></div>
<div class="dot" style="left:378px"></div>
<div class="dot" style="left:466px"></div>
<div class="dot" style="left:496px"></div>
<div class="dot" style="left:561px"></div>
<div class="a" style="left:873px;top:532px;width:4px;height:262px;background:#e2e0dc"></div>
<div class="a" style="left:877px;top:532px;width:15px;height:262px;background:#c4c2bc"></div>
<div class="sbtn" style="left:877px;top:532px;width:15px;height:15px"></div>
<svg class="a" style="left:880px;top:535px" width="9" height="8"><path d="M4.5 1.5 L8 6 H1 Z" fill="#8a8680"/></svg>
<div class="sbtn" style="left:877px;top:547px;width:15px;height:21px"></div>
<div class="sbtn" style="left:877px;top:779px;width:15px;height:15px"></div>
<svg class="a" style="left:880px;top:782px" width="9" height="8"><path d="M4.5 6.5 L8 2 H1 Z" fill="#000"/></svg>
<div class="a" style="left:844px;top:511px;width:10px;height:4px;border:1px solid #000;background:#fff"></div>
<div class="a" style="left:870px;top:511px;width:10px;height:10px;border:1px solid #000;background:#fff;box-shadow:inset 0 1px 0 #fff,inset 0 2px 0 #000"></div>
<div class="a" style="left:899px;top:501px;width:299px;height:297px;background:#fff;border:1px solid #dadada;border-top:none;border-bottom:none;border-radius:7px 7px 5px 5px"></div>
<div class="a" style="left:900px;top:501px;width:100px;height:28px;background:linear-gradient(#dadee7,#e6e9ef 60%,#fdfdfe);border-radius:7px 7px 0 0"></div>
<div class="t" style="left:925px;top:510px;letter-spacing:0.3px">Properties</div>
<div class="t" style="left:903px;top:553px;letter-spacing:0.13px">Select or highlight a single interval to see properties</div>
<div class="a" style="left:903px;top:569px;width:291px;height:225px;border:1px solid #a8a49c;background:#fff"></div>
<div class="a" style="left:1146px;top:511px;width:10px;height:4px;border:1px solid #000;background:#fff"></div>
<div class="a" style="left:1172px;top:511px;width:10px;height:10px;border:1px solid #000;background:#fff;box-shadow:inset 0 1px 0 #fff,inset 0 2px 0 #000"></div>
<svg class="a" style="left:0;top:0" width="480" height="50" viewBox="0 0 480 50"><defs><linearGradient id="lbg" x1="0" y1="0" x2="0" y2="1"><stop offset="0" stop-color="#d8eef8"/><stop offset="1" stop-color="#ffffff"/></linearGradient><linearGradient id="flp" x1="0" y1="0" x2="0" y2="1"><stop offset="0" stop-color="#e8eef8"/><stop offset="1" stop-color="#9cb0d8"/></linearGradient><radialGradient id="grn" cx="0.4" cy="0.35" r="0.7"><stop offset="0" stop-color="#9ad89a"/><stop offset="1" stop-color="#2a8a3a"/></radialGradient><radialGradient id="gry" cx="0.45" cy="0.4" r="0.6"><stop offset="0" stop-color="#f4f4f4"/><stop offset="1" stop-color="#b8b8b8"/></radialGradient></defs><rect x="5.5" y="30.5" width="15" height="11" fill="url(#lbg)" stroke="#a08850"/><rect x="5" y="30" width="9" height="3" fill="#3a80c8"/><path d="M17.5 27.5 L19 30 L21.5 31.5 L19 33 L17.5 35.5 L16 33 L13.5 31.5 L16 30 Z" fill="#d0a420" stroke="#a07810" stroke-width="0.6"/><path d="M17.5 29.5 V33.5 M15.5 31.5 H19.5" stroke="#fff" stroke-width="1"/><rect x="32.5" y="28.5" width="13" height="13" rx="2" fill="url(#flp)" stroke="#5078c0"/><rect x="34.5" y="28.5" width="9" height="7" fill="#f4f6fc" stroke="#5078c0"/><rect x="36" y="37" width="6" height="5" fill="#2a4a9a"/><rect x="37" y="38" width="3" height="3" fill="#c8b888"/><rect x="57.5" y="27.5" width="11" height="11" rx="2" fill="url(#flp)" stroke="#5078c0"/><rect x="59.5" y="27.5" width="7" height="6" fill="#f4f6fc" stroke="#5078c0"/><rect x="60" y="35" width="6" height="4" fill="#2a4a9a"/><rect x="61" y="36" width="3" height="2" fill="#c8b888"/><rect x="63" y="41" width="2" height="2" fill="#0a6a0a"/><rect x="67" y="41" width="2" height="2" fill="#0a6a0a"/><rect x="71" y="41" width="2" height="2" fill="#0a6a0a"/><rect x="83.5" y="27.5" width="13" height="13" fill="#f4f8fc" stroke="#b8a878"/><rect x="86" y="34" width="2" height="5" fill="#187818"/><rect x="89" y="30" width="2" height="9" fill="#187818"/><rect x="92" y="32" width="2" height="7" fill="#187818"/><path d="M94.0 35.5 H96.0 L99.0 38.5 V39.5 L96.0 42.5 H94.0 Z" fill="#3ccc1c" stroke="#1a6010" stroke-width="1"/><rect x="109.5" y="31.5" width="15" height="7" fill="#d8eef8" stroke="#8090a8"/><rect x="110" y="32" width="7" height="6" fill="#3a9a3a"/><rect x="110" y="33" width="7" height="1" fill="#a0e0a0"/><path d="M120.0 36.5 H122.0 L125.0 39.5 V40.5 L122.0 43.5 H120.0 Z" fill="#3ccc1c" stroke="#1a6010" stroke-width="1"/><circle cx="140" cy="32" r="4.5" fill="url(#gry)" stroke="#888" stroke-width="1.2"/><path d="M143.5 35.5 L146 38" stroke="#404040" stroke-width="1.5"/><path d="M146.0 36.5 H148.0 L151.0 39.5 V40.5 L148.0 43.5 H146.0 Z" fill="#3ccc1c" stroke="#1a6010" stroke-width="1"/><path d="M162 33 H167 L164.5 36 Z" fill="#000"/><path d="M462 33 H467 L464.5 36 Z" fill="#000"/><rect x="179" y="27" width="1" height="15" fill="#a09a90"/><rect x="180" y="27" width="1" height="15" fill="#fff"/><rect x="269" y="27" width="1" height="15" fill="#a09a90"/><rect x="270" y="27" width="1" height="15" fill="#fff"/><rect x="333" y="27" width="1" height="15" fill="#a09a90"/><rect x="334" y="27" width="1" height="15" fill="#fff"/><rect x="423" y="27" width="1" height="15" fill="#a09a90"/><rect x="424" y="27" width="1" height="15" fill="#fff"/><circle cx="198" cy="34" r="6.2" fill="#fff" stroke="#90bce4" stroke-width="1.3"/><path d="M202.5 38.5 L206.3 42.3" stroke="#4070b0" stroke-width="2.2"/><rect x="194" y="33" width="8" height="2" fill="#1a3a88"/><rect x="197" y="30" width="2" height="8" fill="#1a3a88"/><circle cx="224" cy="34" r="6.2" fill="#fff" stroke="#90bce4" stroke-width="1.3"/><path d="M228.5 38.5 L232.3 42.3" stroke="#4070b0" stroke-width="2.2"/><rect x="220" y="33" width="8" height="2" fill="#1a3a88"/><circle cx="250" cy="34" r="6.2" fill="#fff" stroke="#90bce4" stroke-width="1.3"/><path d="M254.5 38.5 L258.3 42.3" stroke="#4070b0" stroke-width="2.2"/><rect x="247" y="31.5" width="6" height="1.6" fill="#1a3a88"/><rect x="249" y="29" width="2" height="6" fill="#1a3a88"/><rect x="247" y="36" width="6" height="1.8" fill="#1a3a88"/><rect x="284" y="29" width="1.2" height="1.2" fill="#1a7a2a"/><rect x="285" y="30" width="1.2" height="1.2" fill="#1a7a2a"/><rect x="284" y="31" width="1.2" height="1.2" fill="#1a7a2a"/><rect x="285" y="32" width="1.2" height="1.2" fill="#1a7a2a"/><rect x="284" y="33" width="1.2" height="1.2" fill="#1a7a2a"/><rect x="285" y="34" width="1.2" height="1.2" fill="#1a7a2a"/><rect x="284" y="35" width="1.2" height="1.2" fill="#1a7a2a"/><rect x="285" y="36" width="1.2" height="1.2" fill="#1a7a2a"/><rect x="284" y="37" width="1.2" height="1.2" fill="#1a7a2a"/><rect x="285" y="38" width="1.2" height="1.2" fill="#1a7a2a"/><rect x="284" y="39" width="1.2" height="1.2" fill="#1a7a2a"/><rect x="285" y="40" width="1.2" height="1.2" fill="#1a7a2a"/><rect x="286" y="30" width="1.2" height="1.2" fill="#1a7a2a"/><rect x="287" y="29" width="1.2" height="1.2" fill="#1a7a2a"/><rect x="288" y="30" width="1.2" height="1.2" fill="#1a7a2a"/><rect x="289" y="29" width="1.2" height="1.2" fill="#1a7a2a"/><rect x="290" y="30" width="1.2" height="1.2" fill="#1a7a2a"/><rect x="291" y="29" width="1.2" height="1.2" fill="#1a7a2a"/><rect x="292" y="30" width="1.2" height="1.2" fill="#1a7a2a"/><rect x="293" y="29" width="1.2" height="1.2" fill="#1a7a2a"/><rect x="286" y="35" width="1.2" height="1.2" fill="#1a7a2a"/><rect x="287" y="34" width="1.2" height="1.2" fill="#1a7a2a"/><rect x="288" y="35" width="1.2" height="1.2" fill="#1a7a2a"/><rect x="289" y="34" width="1.2" height="1.2" fill="#1a7a2a"/><path d="M311 29 V41 M310 30 H319" stroke="#2a9a2a" stroke-width="2"/><path d="M310 33.5 H314 V37 H310 Z" fill="#2a9a2a"/><path d="M308 28 L320 41" stroke="#fff" stroke-width="2.6"/><path d="M308 28 L320 41" stroke="#ff0000" stroke-width="1.5"/><rect x="340" y="22" width="26" height="1" fill="#a8a8a0"/><rect x="341" y="23" width="25" height="24" fill="#fff"/><rect x="341" y="23" width="24" height="23" fill="#000"/><rect x="342" y="24" width="23" height="22" fill="#c8c6c0"/><rect x="348.5" y="27.5" width="9" height="9" fill="#f4f8fc" stroke="#c0a870"/><rect x="345" y="38" width="16" height="5" fill="#8098b8"/><rect x="346" y="39" width="2" height="3" fill="#e00000"/><rect x="348" y="39" width="2" height="3" fill="#ff8800"/><rect x="350" y="39" width="2" height="3" fill="#f8f000"/><rect x="352" y="39" width="2" height="3" fill="#30c030"/><rect x="354" y="39" width="2" height="3" fill="#10b0e0"/><rect x="356" y="39" width="2" height="3" fill="#e0006a"/><rect x="358" y="39" width="2" height="3" fill="#9060b0"/><text x="353" y="35.5" text-anchor="middle" font-family="Liberation Sans" font-weight="bold" font-size="9.5" fill="#1a3a90" stroke="#1a3a90" stroke-width="0.4">K</text><rect x="374.5" y="27.5" width="9" height="9" fill="#f4f8fc" stroke="#c0a870"/><rect x="371" y="38" width="16" height="5" fill="#8098b8"/><rect x="372" y="39" width="2" height="3" fill="#e00000"/><rect x="374" y="39" width="2" height="3" fill="#ff8800"/><rect x="376" y="39" width="2" height="3" fill="#f8f000"/><rect x="378" y="39" width="2" height="3" fill="#30c030"/><rect x="380" y="39" width="2" height="3" fill="#10b0e0"/><rect x="382" y="39" width="2" height="3" fill="#e0006a"/><rect x="384" y="39" width="2" height="3" fill="#9060b0"/><text x="379" y="35.5" text-anchor="middle" font-family="Liberation Sans" font-weight="bold" font-size="9.5" fill="#1a3a90" stroke="#1a3a90" stroke-width="0.4">S</text><rect x="400.5" y="27.5" width="9" height="9" fill="#f4f8fc" stroke="#c0a870"/><rect x="397" y="38" width="16" height="5" fill="#8098b8"/><rect x="398" y="39" width="2" height="3" fill="#e00000"/><rect x="400" y="39" width="2" height="3" fill="#ff8800"/><rect x="402" y="39" width="2" height="3" fill="#f8f000"/><rect x="404" y="39" width="2" height="3" fill="#30c030"/><rect x="406" y="39" width="2" height="3" fill="#10b0e0"/><rect x="408" y="39" width="2" height="3" fill="#e0006a"/><rect x="410" y="39" width="2" height="3" fill="#9060b0"/><text x="405" y="35.5" text-anchor="middle" font-family="Liberation Sans" font-weight="bold" font-size="9.5" fill="#1a3a90" stroke="#1a3a90" stroke-width="0.4">P</text><path d="M443 30 L437.5 40.5 M443 30 L448.5 40.5" stroke="#506080" stroke-width="1.2"/><circle cx="443" cy="30" r="3" fill="url(#grn)" stroke="#2a8a3a" stroke-width="0.6"/><circle cx="437.5" cy="40.5" r="2.6" fill="url(#grn)" stroke="#2a8a3a" stroke-width="0.6"/><circle cx="448.5" cy="40.5" r="2.6" fill="url(#grn)" stroke="#2a8a3a" stroke-width="0.6"/></svg>
<svg class="a" style="left:8px;top:56px" width="16" height="19" viewBox="0 0 16 19"><defs><linearGradient id="lap" x1="0" y1="0" x2="1" y2="0.8"><stop offset="0" stop-color="#0a120c"/><stop offset="0.35" stop-color="#2a5a50"/><stop offset="0.7" stop-color="#7cc8b8"/><stop offset="1" stop-color="#d8f8ec"/></linearGradient><linearGradient id="lapb" x1="0" y1="0" x2="1" y2="0"><stop offset="0" stop-color="#101810"/><stop offset="0.6" stop-color="#3a6a2a"/><stop offset="1" stop-color="#4a5a3a"/></linearGradient></defs><path d="M1.2 3.2 L7.7 1.9 L11.2 12.2 L3.3 12.7 Z" fill="url(#lap)"/><path d="M3.3 12.7 L11.2 12.2 L14.3 13.5 L9.3 17.7 Z" fill="url(#lapb)"/><path d="M1.2 3.2 L3.3 12.7 L9.3 17.7" fill="none" stroke="#0a0a0a" stroke-width="1"/></svg>
<svg class="a" style="left:105px;top:61px" width="10" height="10" viewBox="0 0 10 10"><path d="M0.75 0.75 H3 L5 2.7 L7 0.75 H9.25 V3 L7.3 5 L9.25 7 V9.25 H7 L5 7.3 L3 9.25 H0.75 V7 L2.7 5 L0.75 3 Z" fill="#fff" stroke="#000" stroke-width="1.15" stroke-linejoin="round"/></svg>
<svg class="a" style="left:161px;top:511px" width="10" height="10" viewBox="0 0 10 10"><path d="M0.75 0.75 H3 L5 2.7 L7 0.75 H9.25 V3 L7.3 5 L9.25 7 V9.25 H7 L5 7.3 L3 9.25 H0.75 V7 L2.7 5 L0.75 3 Z" fill="#fff" stroke="#000" stroke-width="1.15" stroke-linejoin="round"/></svg>
<svg class="a" style="left:982px;top:511px" width="10" height="10" viewBox="0 0 10 10"><path d="M0.75 0.75 H3 L5 2.7 L7 0.75 H9.25 V3 L7.3 5 L9.25 7 V9.25 H7 L5 7.3 L3 9.25 H0.75 V7 L2.7 5 L0.75 3 Z" fill="#fff" stroke="#000" stroke-width="1.15" stroke-linejoin="round"/></svg>
<svg class="a" style="left:0;top:0" width="900" height="530" viewBox="0 0 900 530"><defs><linearGradient id="tstrip" x1="0" y1="0" x2="1" y2="0"><stop offset="0" stop-color="#4a88c8"/><stop offset="1" stop-color="#d8e8f4"/></linearGradient></defs><rect x="8.5" y="510.5" width="15" height="11" fill="#f0f8fc" stroke="#d8c8a0"/><rect x="8" y="510" width="16" height="3" fill="url(#tstrip)"/><rect x="15.5" y="515.5" width="8" height="7" fill="#f8f8f8" stroke="#a0a0a0"/><rect x="17" y="519" width="1" height="2" fill="#50a050"/><rect x="19" y="517" width="1" height="4" fill="#50a050"/><rect x="21" y="518" width="1" height="3" fill="#50a050"/><rect x="76" y="510" width="16" height="12" fill="#a8a090"/><rect x="76" y="510" width="16" height="3" fill="url(#tstrip)"/><rect x="77" y="513.5" width="2" height="2" fill="#20e020"/><rect x="80" y="513.5" width="2" height="2" fill="#20e020"/><rect x="83" y="513.5" width="2" height="2" fill="#20e020"/><rect x="86" y="513.5" width="2" height="2" fill="#20e020"/><rect x="89" y="513.5" width="2" height="2" fill="#20e020"/><rect x="77" y="516.3" width="2" height="2" fill="#20e020"/><rect x="80" y="516.3" width="2" height="2" fill="#20e020"/><rect x="83" y="516.3" width="2" height="2" fill="#20e020"/><rect x="86" y="516.3" width="2" height="2" fill="#20e020"/><rect x="89" y="516.3" width="2" height="2" fill="#20e020"/><rect x="77" y="519.1" width="2" height="2" fill="#20e020"/><rect x="80" y="519.1" width="2" height="2" fill="#20e020"/><rect x="83" y="519.1" width="2" height="2" fill="#20e020"/><rect x="86" y="519.1" width="2" height="2" fill="#20e020"/><rect x="89" y="519.1" width="2" height="2" fill="#20e020"/><rect x="184" y="510" width="16" height="12" fill="#d8c8a0"/><rect x="184" y="510" width="16" height="3" fill="url(#tstrip)"/><rect x="185" y="514" width="4" height="3" fill="#a8e4f8"/><rect x="190" y="514" width="4" height="3" fill="#a8e4f8"/><rect x="195" y="514" width="4" height="3" fill="#a8e4f8"/><rect x="185" y="518" width="4" height="3" fill="#a8e4f8"/><rect x="190" y="518" width="4" height="3" fill="#a8e4f8"/><rect x="195" y="518" width="4" height="3" fill="#a8e4f8"/><rect x="274.5" y="509.5" width="12" height="10" fill="#f0f4fc" stroke="#90b0d8"/><rect x="276" y="513" width="6" height="1" fill="#8098c8"/><rect x="276" y="515" width="9" height="1" fill="#8098c8"/><rect x="278" y="520" width="5" height="1" fill="#90b0d8"/><rect x="275" y="521" width="11" height="1" fill="#90b0d8"/><rect x="340.5" y="510.5" width="15" height="11" fill="#f0f8fc" stroke="#d8c8a0"/><rect x="340" y="510" width="16" height="3" fill="url(#tstrip)"/><rect x="349.5" y="515.5" width="6" height="7" fill="#f8f8f8" stroke="#a0a0a0"/><rect x="351" y="517" width="1" height="4" fill="#50b050"/><rect x="353" y="517" width="1" height="4" fill="#6090d0"/><path d="M697.5 512.5 L703.5 518.5" stroke="#8a7048" stroke-width="3"/><path d="M697.5 512.5 L703.5 518.5" stroke="#f0d890" stroke-width="1.6"/><path d="M703 518 L704.5 519.5" stroke="#404040" stroke-width="1.5"/><rect x="705" y="519" width="2" height="2" fill="#000"/><rect x="710" y="519" width="2" height="2" fill="#000"/><rect x="722" y="508" width="1" height="15" fill="#a09a90"/><rect x="736.5" y="508.5" width="5" height="5" fill="#d8ecfc" stroke="#2a70c0"/><rect x="736.5" y="517.5" width="5" height="5" fill="#d8ecfc" stroke="#2a70c0"/><rect x="743" y="511" width="6" height="1" fill="#2a70c0"/><rect x="743" y="520" width="6" height="1" fill="#2a70c0"/><rect x="743.5" y="514.5" width="2" height="2" fill="none" stroke="#2a70c0"/><rect x="747" y="515" width="2" height="1" fill="#2a70c0"/><circle cx="768.3" cy="511.8" r="2.1" fill="#c83030"/><path d="M770.2 511.8 Q770.6 515.5 766.8 517.5" stroke="#c83030" stroke-width="1.7" fill="none"/><path d="M761 520.5 H775" stroke="#208030" stroke-width="1.2"/><path d="M760 520.5 L763 518 V523 Z M776 520.5 L773 518 V523 Z" fill="#208030"/><path d="M786.5 515 V522 H801.5 V515" fill="none" stroke="#c0b070" stroke-width="1.2"/><path d="M789 515 V519.5 H799 V515" fill="none" stroke="#c0b070" stroke-width="1"/><path d="M792 517 L798 511" stroke="#208030" stroke-width="1.2"/><path d="M799.5 509.5 L795 510.5 L798.5 514 Z" fill="#208030"/><path d="M821.7 511.7 H830.3 L826 516 Z" fill="#fff" stroke="#000" stroke-width="1.3" stroke-linejoin="round"/></svg>
<svg class="a" style="left:907px;top:510px" width="14" height="12" viewBox="0 0 14 12"><rect x="0.5" y="0.5" width="13" height="11" fill="#f4f6fa" stroke="#6878a0"/><rect x="1" y="1" width="12" height="2" fill="#8898b8"/><path d="M1 5.5 H13 M1 8 H13 M4.5 3 V11" stroke="#98a8c8" stroke-width="1"/></svg>
</div></body></html>
